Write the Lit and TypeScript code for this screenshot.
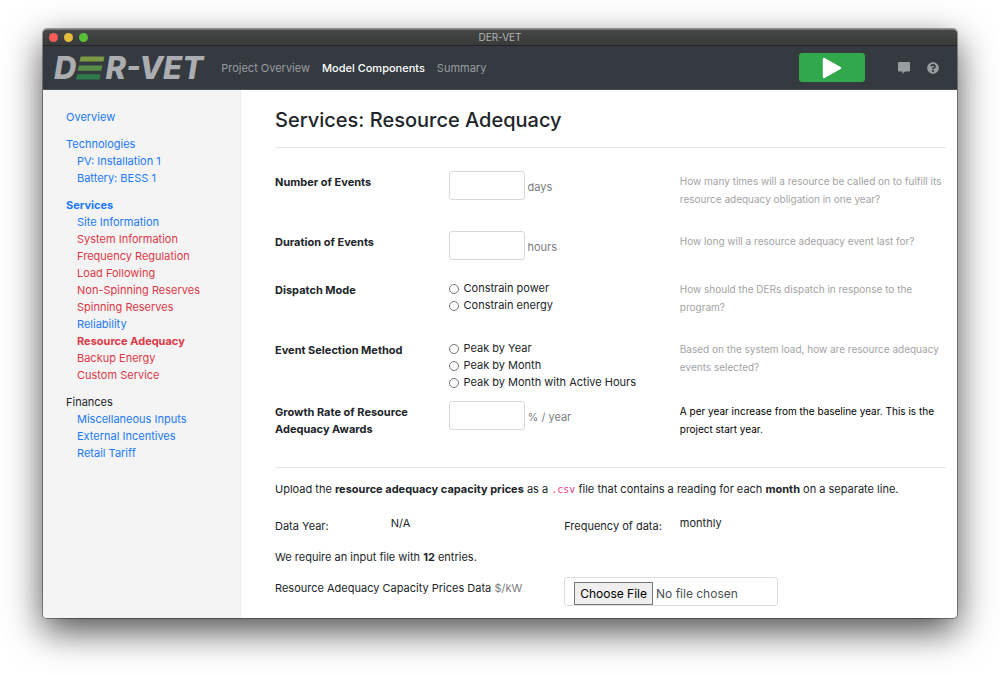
import { LitElement, html, css, nothing } from "lit";
import { customElement, property } from "lit/decorators.js";
import { classMap } from "lit/directives/class-map.js";

interface NavItem {
  label: string;
  tone?: "error" | "plain";
  active?: boolean;
}

interface NavGroup {
  head: NavItem;
  items: NavItem[];
}

const NAV: NavGroup[] = [
  { head: { label: "Overview" }, items: [] },
  {
    head: { label: "Technologies" },
    items: [{ label: "PV: Installation 1" }, { label: "Battery: BESS 1" }],
  },
  {
    head: { label: "Services", active: true },
    items: [
      { label: "Site Information" },
      { label: "System Information", tone: "error" },
      { label: "Frequency Regulation", tone: "error" },
      { label: "Load Following", tone: "error" },
      { label: "Non-Spinning Reserves", tone: "error" },
      { label: "Spinning Reserves", tone: "error" },
      { label: "Reliability" },
      { label: "Resource Adequacy", tone: "error", active: true },
      { label: "Backup Energy", tone: "error" },
      { label: "Custom Service", tone: "error" },
    ],
  },
  {
    head: { label: "Finances", tone: "plain" },
    items: [
      { label: "Miscellaneous Inputs" },
      { label: "External Incentives" },
      { label: "Retail Tariff" },
    ],
  },
];

interface Field {
  id: string;
  label: string;
  help: string;
  unit?: string;
  options?: string[];
  strong?: boolean;
}

const FIELDS: Field[] = [
  {
    id: "events",
    label: "Number of Events",
    unit: "days",
    help: "How many times will a resource be called on to fulfill its resource adequacy obligation in one year?",
  },
  {
    id: "duration",
    label: "Duration of Events",
    unit: "hours",
    help: "How long will a resource adequacy event last for?",
  },
  {
    id: "dispatch",
    label: "Dispatch Mode",
    options: ["Constrain power", "Constrain energy"],
    help: "How should the DERs dispatch in response to the program?",
  },
  {
    id: "selection",
    label: "Event Selection Method",
    options: ["Peak by Year", "Peak by Month", "Peak by Month with Active Hours"],
    help: "Based on the system load, how are resource adequacy events selected?",
  },
  {
    id: "growth",
    label: "Growth Rate of Resource Adequacy Awards",
    unit: "% / year",
    help: "A per year increase from the baseline year. This is the project start year.",
    strong: true,
  },
];

@customElement("top-bar")
export class TopBar extends LitElement {
  static styles = css`
    :host {
      display: block;
    }
    .title {
      display: grid;
      grid-template-columns: 1fr auto 1fr;
      align-items: center;
      height: 17px;
      padding: 0 6px;
      box-sizing: border-box;
      background: linear-gradient(#454747, #393a3a);
      border-top: 1px solid #77797a;
      border-bottom: 1px solid #222425;
      border-radius: 4px 4px 0 0;
      color: #b4b5b5;
      font-size: 10px;
      line-height: 15px;
    }
    .lights {
      display: flex;
      gap: 6px;
    }
    .light {
      width: 9px;
      height: 9px;
      border-radius: 50%;
    }
    .close {
      background: #fc5b57;
    }
    .min {
      background: #e5bf3c;
    }
    .max {
      background: #57c038;
    }
    .bar {
      display: flex;
      align-items: center;
      height: 44px;
      padding: 0 18px 0 11px;
      background: #343a40;
      border-bottom: 1px solid #4b5055;
      box-sizing: border-box;
    }
    .logo {
      display: flex;
      align-items: center;
      color: #acadb1;
      font: italic 800 31px/40px Inter, sans-serif;
      text-decoration: none;
    }
    .links {
      display: flex;
      gap: 12px;
      margin-left: 18px;
      padding-top: 2px;
      flex: 1;
    }
    .link {
      color: #9a9da0;
      text-decoration: none;
      line-height: 17px;
    }
    .current {
      color: #fff;
      font-weight: 500;
    }
    .run {
      display: grid;
      place-items: center;
      width: 66px;
      height: 29px;
      padding: 0;
      border: 0;
      border-radius: 3px;
      background: #31a84c;
    }
    .icon {
      display: grid;
      place-items: center;
      padding: 0;
      border: 0;
      background: none;
      color: #9a9da0;
    }
    .chat {
      margin-left: 33px;
    }
    .ask {
      margin-left: 17px;
    }
  `;

  render() {
    return html`
      <div class="title">
        <div class="lights">
          <span class="light close"></span><span class="light min"></span><span class="light max"></span>
        </div>
        <span>DER-VET</span>
      </div>
      <nav class="bar">
        <a class="logo" href="#" aria-label="DER-VET">
          <span>D</span>
          <svg width="29" height="24" viewBox="0 0 29 24" aria-hidden="true">
            <path d="M4.800 .5H28.500L27.400 5.500H3.600Z" fill="#7c9a44" />
            <path d="M2.900 9.500H26.500L25.200 14.800H1.600Z" fill="#568e47" />
            <path d="M1.300 18.300H24.600L23.400 23.500H0Z" fill="#2f7a4a" />
          </svg>
          <span>R-VET</span>
        </a>
        <div class="links">
          <a class="link" href="#">Project Overview</a>
          <a class="link current" href="#">Model Components</a>
          <a class="link" href="#">Summary</a>
        </div>
        <button class="run" aria-label="Run">
          <svg width="20" height="22" viewBox="0 0 20 22">
            <path d="M2 2V20L18 11Z" fill="#fff" stroke="#fff" stroke-width="2.4" stroke-linejoin="round" />
          </svg>
        </button>
        <button class="icon chat" aria-label="Feedback">
          <svg width="12" height="12" viewBox="0 0 12 12" fill="currentColor">
            <path d="M1 0H11Q12 0 12 1V8.4Q12 9.4 11 9.4H7L4.6 12V9.4H1Q0 9.4 0 8.4V1Q0 0 1 0Z" />
          </svg>
        </button>
        <button class="icon ask" aria-label="Help">
          <svg width="12" height="12" viewBox="0 0 512 512" fill="currentColor">
            <path
              d="M504 256c0 137-111 248-248 248S8 393 8 256C8 119.100 119 8 256 8s248 111.100 248 248zM262.700 90c-54.500 0-89.300 23-116.500 63.800-3.500 5.300-2.400 12.400 2.700 16.300l34.700 26.300c5.200 3.900 12.600 3 16.700-2.100 17.900-22.700 30.100-35.800 57.300-35.800 20.400 0 45.700 13.100 45.700 33 0 15-12.400 22.700-32.500 34C247.100 238.500 216 254.900 216 296v4c0 6.600 5.400 12 12 12h56c6.600 0 12-5.400 12-12v-1.300c0-28.500 83.200-29.600 83.200-106.700 0-58-60.200-102-116.500-102zM256 338c-25.400 0-46 20.600-46 46 0 25.400 20.600 46 46 46s46-20.600 46-46c0-25.400-20.600-46-46-46z"
            />
          </svg>
        </button>
      </nav>
    `;
  }
}

@customElement("side-nav")
export class SideNav extends LitElement {
  static styles = css`
    :host {
      display: block;
      background: #f4f4f4;
      border-right: 1px solid #ededed;
      padding: 19px 12px 18px 23px;
      line-height: 17px;
    }
    .group {
      margin-bottom: 10px;
    }
    .list {
      list-style: none;
      margin: 0;
      padding: 0 0 0 11px;
    }
    .item {
      color: #2079f8;
      text-decoration: none;
    }
    .error {
      color: #dc3848;
    }
    .plain {
      color: #212529;
    }
    .active {
      font-weight: 700;
    }
  `;

  private link(item: NavItem) {
    const classes = {
      item: true,
      error: item.tone === "error",
      plain: item.tone === "plain",
      active: !!item.active,
    };
    return html`<a class=${classMap(classes)} href="#">${item.label}</a>`;
  }

  render() {
    return NAV.map(
      (group) => html`
        <div class="group">
          ${this.link(group.head)}
          ${group.items.length
            ? html`<ul class="list">
                ${group.items.map((item) => html`<li>${this.link(item)}</li>`)}
              </ul>`
            : nothing}
        </div>
      `,
    );
  }
}

@customElement("field-row")
export class FieldRow extends LitElement {
  @property({ attribute: false }) field!: Field;

  static styles = css`
    :host {
      display: grid;
      grid-template-columns: repeat(12, minmax(0, 1fr));
      column-gap: 23px;
    }
    .label {
      grid-column: span 3;
      padding-top: 3px;
      font-weight: 700;
      line-height: 17px;
    }
    .control {
      grid-column: span 4;
    }
    .entry {
      display: flex;
      align-items: center;
      gap: 3px;
      padding-bottom: 19px;
    }
    .unit {
      padding-top: 3px;
      color: #7b7d80;
    }
    .input {
      width: 76px;
      height: 29px;
      box-sizing: border-box;
      border: 1px solid #d5d9de;
      border-radius: 3px;
      padding: 4px 8px;
      font: inherit;
      background: #fff;
    }
    .choices {
      padding: 1px 0 10px;
    }
    .choice {
      display: flex;
      align-items: center;
      gap: 5px;
      line-height: 17px;
    }
    .radio {
      appearance: none;
      width: 10px;
      height: 10px;
      box-sizing: border-box;
      margin: 0;
      border: 1px solid #767676;
      border-radius: 50%;
      background: #fff;
    }
    .radio:checked {
      background: #2079f8;
    }
    .help {
      grid-column: span 5;
      margin: 0;
      padding: 1px 0 23px;
      color: #a3a3a3;
      font-size: 10px;
      line-height: 18px;
    }
    .strong {
      color: #000;
    }
  `;

  render() {
    const { id, label, unit, options, help, strong } = this.field;
    return html`
      ${options
        ? html`
            <span class="label" id=${id}>${label}</span>
            <div class="control choices" role="radiogroup" aria-labelledby=${id}>
              ${options.map(
                (option) => html`
                  <label class="choice">
                    <input class="radio" type="radio" name=${id} .value=${option} />${option}
                  </label>
                `,
              )}
            </div>
          `
        : html`
            <label class="label" for=${id}>${label}</label>
            <div class="control">
              <div class="entry">
                <input class="input" id=${id} type="text" /><span class="unit">${unit}</span>
              </div>
            </div>
          `}
      <p class=${classMap({ help: true, strong: !!strong })}>${help}</p>
    `;
  }
}

@customElement("app-root")
export class AppRoot extends LitElement {
  static styles = css`
    :host {
      display: flex;
      min-height: 100vh;
      box-sizing: border-box;
      padding: 29px 43px 57px;
      background: #fff;
      color: #212529;
      font-family: Inter, sans-serif;
      font-size: 11px;
    }
    .window {
      display: flex;
      flex-direction: column;
      flex: 1;
      min-width: 0;
      border-radius: 4px;
      background: #fff;
      box-shadow:
        0 0 0 1px rgba(0, 0, 0, 0.35),
        0 13px 36px rgba(0, 0, 0, 0.7);
    }
    .body {
      display: grid;
      grid-template-columns: 198px minmax(0, 1fr);
      flex: 1;
    }
    .nav {
      border-bottom-left-radius: 4px;
    }
    .main {
      padding: 16px 11px 12px 34px;
      line-height: 17px;
    }
    .heading {
      margin: 0;
      font-size: 20px;
      line-height: 28px;
      font-weight: 500;
    }
    .rule {
      height: 0;
      margin: 13px 0 23px;
      border: 0;
      border-top: 1px solid #e6e6e6;
    }
    .lower {
      margin: 6px 0 13px;
    }
    .text {
      margin: 0;
    }
    .code {
      color: #e83e8c;
      font-family: "DejaVu Sans Mono", monospace;
      font-size: 10px;
    }
    .grid {
      display: grid;
      grid-template-columns: repeat(12, minmax(0, 1fr));
      column-gap: 23px;
    }
    .meta {
      margin: 17px 0 14px;
    }
    .two {
      grid-column: span 2;
      white-space: nowrap;
    }
    .three {
      grid-column: span 3;
    }
    .five {
      grid-column: span 5;
    }
    .name {
      padding-top: 3px;
    }
    .upload {
      margin-top: 11px;
    }
    .unit {
      color: #7b7d80;
    }
    .file {
      grid-column: span 5;
      width: 214px;
      height: 29px;
      box-sizing: border-box;
      padding: 4px 9px;
      border: 1px solid #dadde1;
      border-radius: 3px;
      color: #495057;
      font: inherit;
      font-size: 12px;
    }
    .file::file-selector-button {
      height: 23px;
      margin: 0 3px 0 0;
      padding: 0 5px;
      border: 1px solid #767676;
      border-radius: 0;
      background: #efefef;
      color: #000;
      font: inherit;
    }
  `;

  render() {
    return html`
      <div class="window">
        <top-bar></top-bar>
        <div class="body">
          <side-nav class="nav"></side-nav>
          <main class="main">
            <h1 class="heading">Services: Resource Adequacy</h1>
            <hr class="rule" />
            ${FIELDS.map((field) => html`<field-row .field=${field}></field-row>`)}
            <hr class="rule lower" />
            <p class="text">
              Upload the <b>resource adequacy capacity prices</b> as a <code class="code">.csv</code> file that
              contains a reading for each <b>month</b> on a separate line.
            </p>
            <div class="grid meta">
              <span class="two name">Data Year:</span>
              <span class="three">N/A</span>
              <span class="two name">Frequency of data:</span>
              <span class="five">monthly</span>
            </div>
            <p class="text">We require an input file with <b>12</b> entries.</p>
            <div class="grid upload">
              <label class="five name" for="prices"
                >Resource Adequacy Capacity Prices Data <span class="unit">$/kW</span></label
              >
              <input class="file" id="prices" type="file" />
            </div>
          </main>
        </div>
      </div>
    `;
  }
}
